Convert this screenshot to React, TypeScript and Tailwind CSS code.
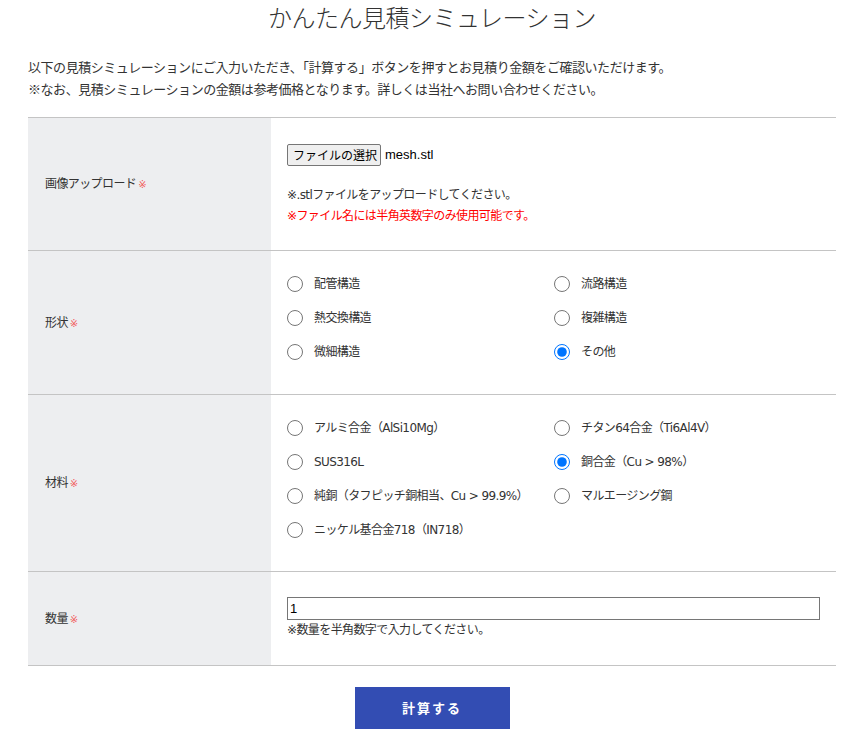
import { useState } from "react";

const shapes = [
  ["配管構造", "流路構造"],
  ["熱交換構造", "複雑構造"],
  ["微細構造", "その他"],
];

const materials = [
  ["アルミ合金（AlSi10Mg）", "チタン64合金（Ti6Al4V）"],
  ["SUS316L", "銅合金（Cu > 98%）"],
  ["純銅（タフピッチ銅相当、Cu > 99.9%）", "マルエージング鋼"],
  ["ニッケル基合金718（IN718）"],
];

// table text: wide latin (Verdana-like) + CJK fallback
const tableFont = '"DejaVu Sans", "Noto Sans CJK JP", sans-serif';

function Label({ text }: { text: string }) {
  return (
    <th className="w-[243px] bg-[#edeef0] pl-[17px] text-left align-middle font-normal">
      {text}
      <span className="ml-[2px] text-[10px] text-[#f25c5c]">※</span>
    </th>
  );
}

function RadioGrid({ name, rows, value, onChange }: { name: string; rows: string[][]; value: string; onChange: (v: string) => void }) {
  return (
    <div className="grid grid-cols-[267px_1fr]">
      {rows.flat().map((opt) => (
        <label key={opt} className="flex h-[34px] items-center cursor-pointer">
          <input
            type="radio"
            name={name}
            checked={value === opt}
            onChange={() => onChange(opt)}
            className="m-0 h-[16px] w-[16px] shrink-0 accent-[#0075ff]"
          />
          <span className="ml-[11px] whitespace-nowrap">{opt}</span>
        </label>
      ))}
    </div>
  );
}

export default function App() {
  const [shape, setShape] = useState("その他");
  const [material, setMaterial] = useState("銅合金（Cu > 98%）");
  const [qty, setQty] = useState("1");

  return (
    <div
      className="min-h-[742px] bg-white pt-[2px] text-[13px] text-[#333]"
      style={{ fontFamily: '"Noto Sans CJK JP", "Noto Sans", sans-serif' }}
    >
      <div className="ml-[28px] w-[808px]">
        <h1 className="text-center text-[24px] leading-[30px] font-light tracking-[-0.5px] text-[#333]">
          かんたん見積シミュレーション
        </h1>

        <div className="mt-[24px] leading-[22px] tracking-[-0.45px]">
          <p>以下の見積シミュレーションにご入力いただき、「計算する」ボタンを押すとお見積り金額をご確認いただけます。</p>
          <p>※なお、見積シミュレーションの金額は参考価格となります。詳しくは当社へお問い合わせください。</p>
        </div>

        <table className="mt-[17px] w-full border-collapse text-[12px] tracking-[-0.6px]" style={{ fontFamily: tableFont }}>
          <tbody>
            <tr className="border-y border-[#c4c4c4]">
              <Label text="画像アップロード" />
              <td className="h-[133px] px-[16px] align-top">
                <div className="pt-[26px] flex items-center">
                  <span className="flex h-[22px] items-center rounded-[2px] border border-[#767676] bg-[#efefef] pl-[5px] pr-[3px] text-[12px] tracking-normal text-black" style={{ fontFamily: '"Noto Sans CJK JP", sans-serif' }}>
                    ファイルの選択
                  </span>
                  <span className="ml-[4px] text-[13px] tracking-normal text-black" style={{ fontFamily: '"Liberation Sans", "Noto Sans CJK JP", sans-serif' }}>
                    mesh.stl
                  </span>
                </div>
                <p className="mt-[19px] leading-[21px]">※.stlファイルをアップロードしてください。</p>
                <p className="leading-[21px] text-[#ff0000]">※ファイル名には半角英数字のみ使用可能です。</p>
              </td>
            </tr>
            <tr className="border-b border-[#c4c4c4]">
              <Label text="形状" />
              <td className="h-[143px] px-[16px] pt-[16px] pb-[25px] align-top">
                <RadioGrid name="shape" rows={shapes} value={shape} onChange={setShape} />
              </td>
            </tr>
            <tr className="border-b border-[#c4c4c4]">
              <Label text="材料" />
              <td className="h-[176px] px-[16px] pt-[16px] pb-[24px] align-top">
                <RadioGrid name="material" rows={materials} value={material} onChange={setMaterial} />
              </td>
            </tr>
            <tr className="border-b border-[#c4c4c4]">
              <Label text="数量" />
              <td className="h-[92px] px-[16px] pt-[25px] pb-[25px] align-top">
                <input
                  value={qty}
                  onChange={(e) => setQty(e.target.value)}
                  className="block h-[23px] w-full border border-[#767676] px-[2px] text-[13px] tracking-normal text-black outline-none"
                  style={{ fontFamily: '"Liberation Sans", sans-serif' }}
                />
                <p className="leading-[20px]">※数量を半角数字で入力してください。</p>
              </td>
            </tr>
          </tbody>
        </table>

        <div className="mt-[21px] flex justify-center">
          <button
            type="button"
            className="h-[42px] w-[155px] bg-[#334db3] text-[13px] font-bold tracking-[2px] text-white"
          >
            計算する
          </button>
        </div>
      </div>
    </div>
  );
}
